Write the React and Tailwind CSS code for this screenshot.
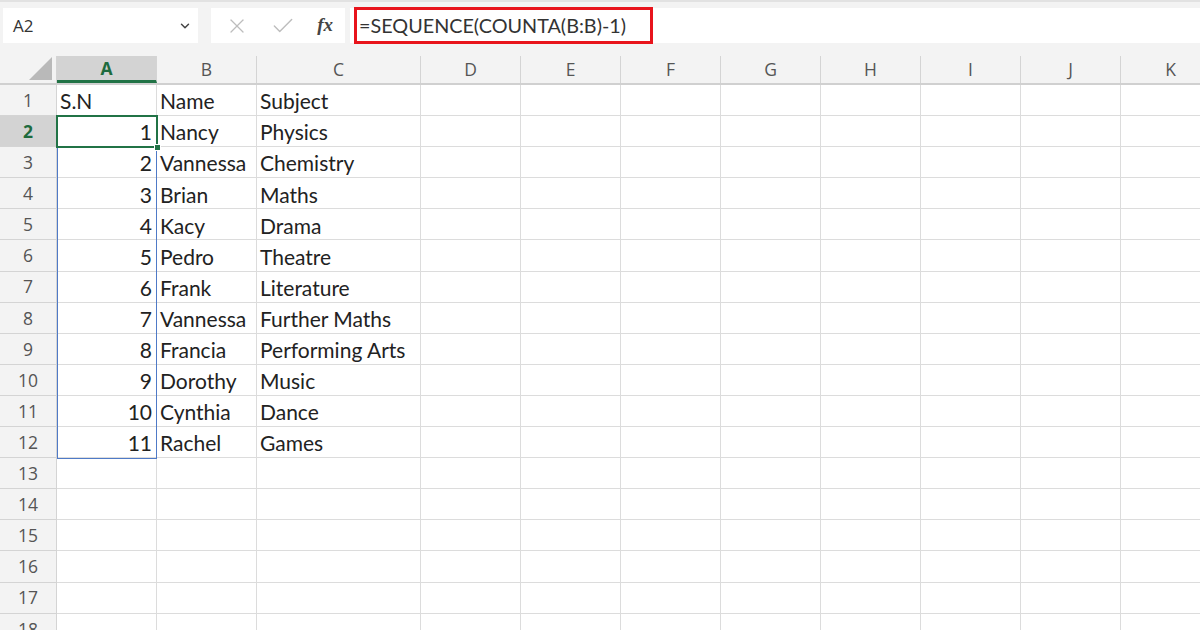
import { ChevronDown, X, Check } from "lucide-react";

const cols = ["A", "B", "C", "D", "E", "F", "G", "H", "I", "J", "K"];
const widths = ["w-[100px]", "w-[100px]", "w-[164px]", "w-[100px]", "w-[100px]", "w-[100px]", "w-[100px]", "w-[100px]", "w-[100px]", "w-[100px]", "w-[100px]"];

const data = [
  ["S.N", "Name", "Subject"],
  [1, "Nancy", "Physics"],
  [2, "Vannessa", "Chemistry"],
  [3, "Brian", "Maths"],
  [4, "Kacy", "Drama"],
  [5, "Pedro", "Theatre"],
  [6, "Frank", "Literature"],
  [7, "Vannessa", "Further Maths"],
  [8, "Francia", "Performing Arts"],
  [9, "Dorothy", "Music"],
  [10, "Cynthia", "Dance"],
  [11, "Rachel", "Games"],
];

const ui = { fontFamily: '"Open Sans", "Noto Sans", sans-serif' };
const cellFont = { fontFamily: 'Lato, "Open Sans", sans-serif' };

export default function App() {
  const rows = Array.from({ length: 18 }, (_, i) => i + 1);

  return (
    <div className="w-[1200px] h-[630px] overflow-hidden bg-white" style={ui}>
      {/* formula bar */}
      <div className="h-[56px] bg-[#f3f3f3] border-t-2 border-[#e2e2e2] flex items-start pt-[6px] pl-[3px] gap-[13px]">
        <div className="w-[195px] h-[35px] bg-white flex items-center justify-between pl-[10px] pr-[6px] text-[17px] text-[#333]">
          <span>A2</span>
          <ChevronDown size={14} strokeWidth={2.5} className="text-[#444]" />
        </div>
        <div className="flex gap-[5px]">
          <div className="w-[134px] h-[35px] bg-white flex items-center justify-between pl-[14px] pr-[12px]">
            <X size={24} strokeWidth={1.3} className="text-[#bdbdbd]" />
            <Check size={26} strokeWidth={1.3} className="text-[#bdbdbd]" />
            <span className="text-[19px] italic text-[#444] font-semibold" style={{ fontFamily: '"Liberation Serif", serif' }}>fx</span>
          </div>
          <div className="w-[850px] h-[35px] bg-white flex items-center pl-[4px]">
            <div className="w-[299px] h-[37px] border-[3px] border-[#e8141c] flex items-center pl-[2px] text-[19.8px] text-[#333]" style={cellFont}>
              =SEQUENCE(COUNTA(B:B)-1)
            </div>
          </div>
        </div>
      </div>

      {/* grid */}
      <div className="relative">
        <div className="flex h-[29px] bg-[#f3f3f3] border-b-2 border-[#d0d0d0]">
          <div className="w-[57px] shrink-0 border-r border-[#d4d4d4] relative">
            <div
              className="absolute right-[4px] bottom-[3px] w-[23px] h-[23px] bg-[#b9b9b9]"
              style={{ clipPath: "polygon(100% 0, 100% 100%, 0 100%)" }}
            />
          </div>
          {cols.map((c, i) => (
            <div
              key={c}
              className={`${widths[i]} shrink-0 flex items-center justify-center text-[17.5px] border-r border-[#d4d4d4] ${
                i === 0 ? "bg-[#d3d3d3] text-[#1e6b3e] font-bold border-b-[3px] border-b-[#217346]" : "text-[#555]"
              }`}
            >
              {c}
            </div>
          ))}
        </div>

        {rows.map((r) => {
          const row = data[r - 1] || [];
          return (
            <div key={r} className="flex h-[31.1px]">
              <div
                className={`w-[57px] shrink-0 flex items-center justify-center text-[17.5px] border-b border-r border-[#d4d4d4] ${
                  r === 2 ? "bg-[#d3d3d3] text-[#1e6b3e] font-bold" : "bg-[#f3f3f3] text-[#555]"
                }`}
              >
                {r}
              </div>
              {cols.map((c, i) => {
                const v = row[i];
                const num = typeof v === "number";
                return (
                  <div
                    key={c}
                    className={`${widths[i]} shrink-0 flex items-center pl-[3px] pr-[4px] pt-[2px] text-[21px] text-[#222] border-b border-r border-[#dcdcdc] whitespace-nowrap ${
                      num ? "justify-end" : "justify-start"
                    }`}
                    style={cellFont}
                  >
                    {v}
                  </div>
                );
              })}
            </div>
          );
        })}

        {/* spill range */}
        <div className="absolute left-[57px] top-[60px] w-[100px] h-[343px] border border-[#4f7ac7] pointer-events-none" />
        {/* active cell */}
        <div className="absolute left-[56px] top-[59px] w-[102px] h-[33px] border-2 border-[#217346] pointer-events-none" />
        <div className="absolute left-[154px] top-[88px] w-[7px] h-[7px] bg-[#217346] border border-white" />
      </div>
    </div>
  );
}
